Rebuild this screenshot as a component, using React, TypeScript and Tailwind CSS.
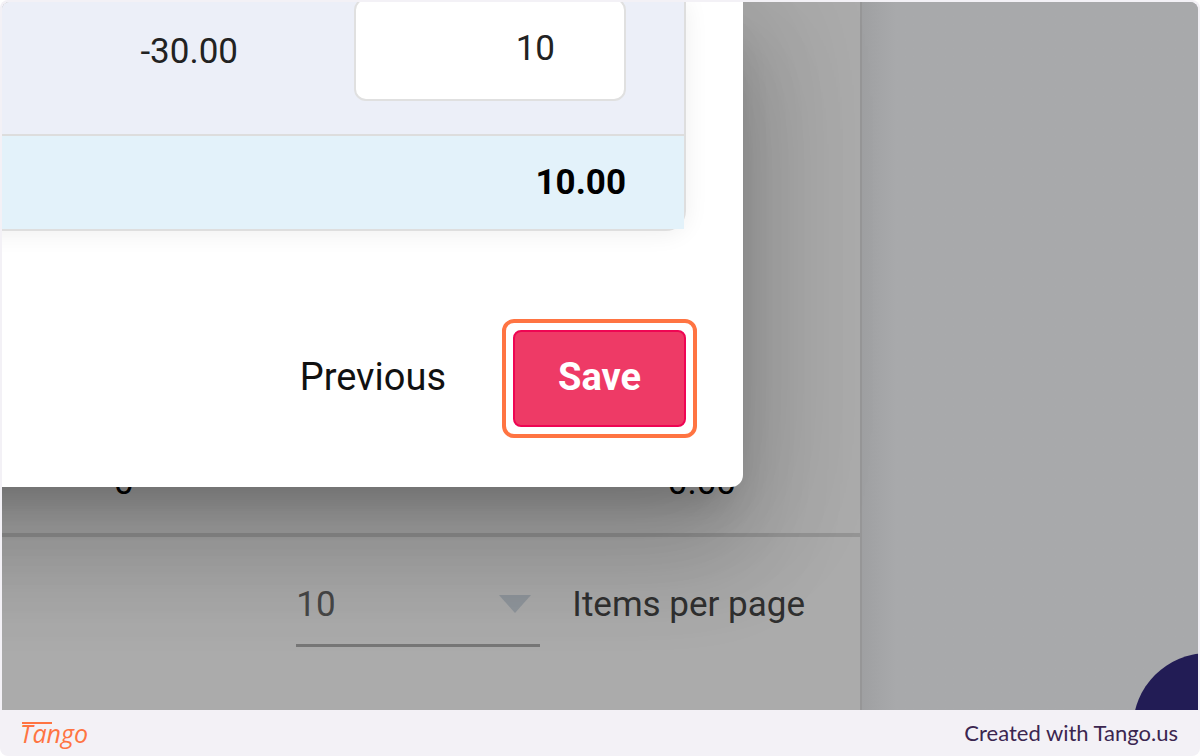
import React, { useState } from 'react'

const pageSizes = ['10', '25', '50']

function ItemsList() {
  const [pageSize, setPageSize] = useState('10')

  return (
    <div className="flex flex-1 flex-col border-r-2 border-[#969697] bg-[#ababab]">
      <div className="flex flex-1 items-end justify-between border-b-4 border-[#949494] pr-[124px] pb-[28px] pl-[112px] text-[35px] leading-[44px] text-black">
        <span>0</span>
        <span>0.00</span>
      </div>

      <div className="flex h-[173px] items-start justify-end pt-[42px] pr-[55px] text-[35px] leading-[52px]">
        <div className="relative mr-[32px] w-[244px]">
          <select
            id="page-size"
            value={pageSize}
            onChange={e => setPageSize(e.target.value)}
            className="h-[68px] w-full appearance-none border-b-3 border-[#777777] bg-transparent pb-[26px] text-[#474747] outline-none"
          >
            {pageSizes.map(size => (
              <option key={size} value={size}>
                {size}
              </option>
            ))}
          </select>
          <svg
            viewBox="0 0 32 18"
            className="pointer-events-none absolute top-[16px] right-[9px] h-[18px] w-[32px]"
            aria-hidden="true"
          >
            <path d="M0 0H32L16 18Z" fill="#8f959b" />
          </svg>
        </div>
        <label htmlFor="page-size" className="text-[#303030]">
          Items per page
        </label>
      </div>
    </div>
  )
}

function AmountDialog() {
  const [amount, setAmount] = useState('10')

  return (
    <div
      role="dialog"
      aria-label="Amounts"
      className="rounded-br-xl bg-white shadow-[0_29px_40px_-19px_rgba(0,0,0,0.2),0_64px_101px_8px_rgba(0,0,0,0.14),0_24px_123px_21px_rgba(0,0,0,0.12)]"
    >
      <div className="mr-[57px] rounded-br-[20px] border-r-2 border-b-2 border-[#dedede] shadow-[0_2px_24px_rgba(0,0,0,0.07)]">
        <table className="w-full border-separate border-spacing-0 text-right text-[35px] leading-[44px]">
          <tbody>
            <tr className="h-[132px] bg-[#eceff8] align-top text-[#222222]">
              <td className="pt-[28px] pr-[116px]">-30.00</td>
              <td className="w-[330px] pr-[58px]">
                <input
                  type="text"
                  aria-label="Amount"
                  value={amount}
                  onChange={e => setAmount(e.target.value)}
                  className="-mt-1 block h-[103px] w-full rounded-xl border-2 border-[#e0e0e0] bg-white pr-[69px] pb-[2px] text-right outline-none"
                />
              </td>
            </tr>
            <tr className="h-[95px] bg-[#e3f2fa] font-bold text-black">
              <td colSpan={2} className="border-t-2 border-[#dddddd] pr-[58px]">
                10.00
              </td>
            </tr>
          </tbody>
        </table>
      </div>

      <div className="flex items-center justify-end gap-[56px] pt-[88px] pr-[46px] pb-[49px] text-[38px] leading-[44px]">
        <button type="button" className="pb-[4px] text-[#111111]">
          Previous
        </button>
        <div className="rounded-xl border-4 border-[#ff7442] p-[7px]">
          <button
            type="button"
            className="h-[97px] w-[173px] rounded-lg border-2 border-[#ef0553] bg-[#ee3a66] pb-[4px] font-bold text-white"
          >
            Save
          </button>
        </div>
      </div>
    </div>
  )
}

function TangoLogo() {
  return (
    <div className="relative font-['Open_Sans',sans-serif] text-[25px] leading-[32px] text-[#ff7442] italic">
      Tango
      <svg viewBox="0 0 30 2" className="absolute top-[5px] left-[2px] h-[2px] w-[30px]" aria-hidden="true">
        <path d="M0 1H30" stroke="#ff7442" strokeWidth="2" />
      </svg>
    </div>
  )
}

export default function App() {
  return (
    <div className="bg-white">
      <div className="flex min-h-screen flex-col rounded-lg bg-[#f3f1f6] px-0.5 pt-0.5">
        <main className="relative flex flex-1 overflow-hidden rounded-t-lg bg-[#a8a9ab] font-['Roboto',sans-serif]">
          <ItemsList />
          <div className="w-[336px] bg-linear-to-r from-[#9fa0a2] to-[#a8a9ab] to-10%" />

          <button
            type="button"
            aria-label="Help"
            className="absolute -right-[85px] -bottom-[93px] size-[150px] rounded-full bg-[#221c55]"
          />

          {/* dialog sits over the list and runs past the left edge of the frame */}
          <div className="absolute top-0 right-0 -left-40 pr-[455px]">
            <AmountDialog />
          </div>
        </main>

        <footer className="flex h-[46px] items-center justify-between pr-[20px] pl-[18px] font-['Lato',sans-serif]">
          <TangoLogo />
          <a href="#" className="text-[22px] leading-[32px] text-[#3b2650]">
            Created with Tango.us
          </a>
        </footer>
      </div>
    </div>
  )
}
